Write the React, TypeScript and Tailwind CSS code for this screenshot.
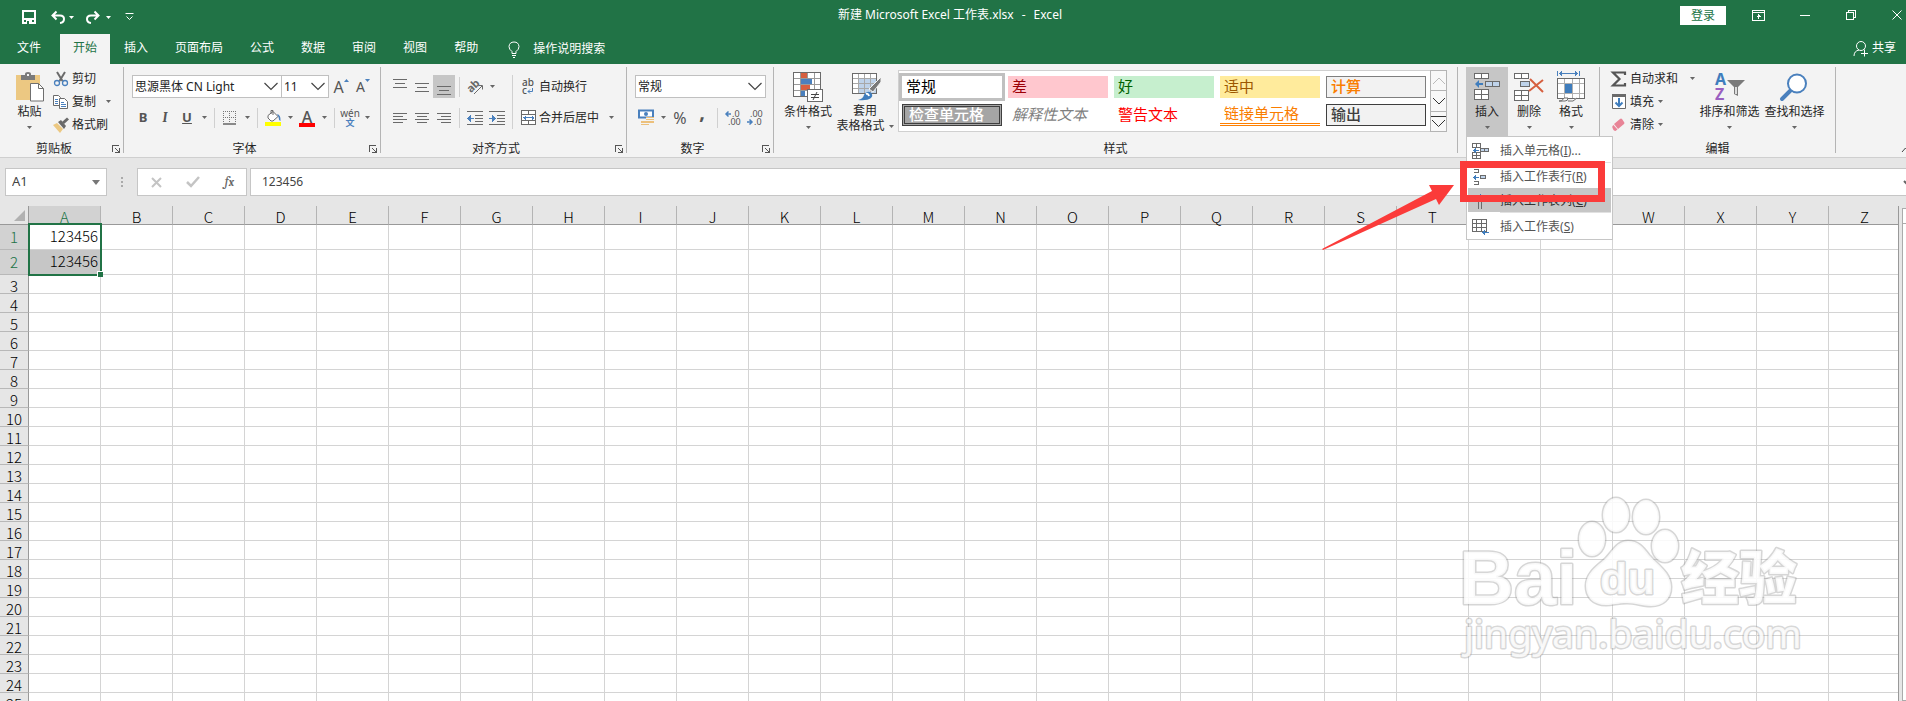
import { Fragment } from "react";
import type { ReactNode } from "react";
import clsx from "clsx";

const TABS = ["文件", "开始", "插入", "页面布局", "公式", "数据", "审阅", "视图", "帮助"];
const COLUMNS = "ABCDEFGHIJKLMNOPQRSTUVWXYZ".split("");
const ROWS = Array.from({ length: 25 }, (_, i) => i + 1);
const CELLS: Record<string, string> = { A1: "123456", A2: "123456" };

const STYLES = [
  { name: "常规", className: "bg-white text-black outline-3 outline-[#c0c0c0]" },
  { name: "差", className: "bg-[#ffc7ce] text-[#9c0006]" },
  { name: "好", className: "bg-[#c6efce] text-[#006100]" },
  { name: "适中", className: "bg-[#ffeb9c] text-[#9c5700]" },
  { name: "计算", className: "border border-[#7f7f7f] bg-[#f2f2f2] font-medium text-[#fa7d00]" },
  { name: "检查单元格", className: "border-3 border-double border-[#3f3f3f] bg-[#a5a5a5] font-medium text-white" },
  { name: "解释性文本", className: "italic text-[#7f7f7f]" },
  { name: "警告文本", className: "text-[#ff0000]" },
  { name: "链接单元格", className: "border-b-3 border-double border-[#ff8001] text-[#fa7d00]" },
  { name: "输出", className: "border border-[#3f3f3f] bg-[#f2f2f2] font-medium text-[#3f3f3f]" },
];

type IconProps = { w?: number; h?: number; crisp?: boolean; children: ReactNode; className?: string };

function Icon({ w = 16, h = 16, crisp, children, className }: IconProps) {
  return (
    <svg
      width={w}
      height={h}
      viewBox={`0 0 ${w} ${h}`}
      fill="none"
      stroke="#6a6a6a"
      shapeRendering={crisp ? "crispEdges" : "auto"}
      className={clsx("shrink-0 overflow-visible", className)}
      aria-hidden="true"
    >
      {children}
    </svg>
  );
}

function Caret({ className }: { className?: string }) {
  return (
    <svg width="5" height="3" viewBox="0 0 5 3" className={clsx("shrink-0", className)} aria-hidden="true">
      <path d="M0 0h5L2.500 3z" fill="currentColor" />
    </svg>
  );
}

function Chevron() {
  return (
    <Icon w={14} h={9} className="pointer-events-none mr-[3px]">
      <path d="M.5 1L7 7.500 13.500 1" stroke="#444" strokeWidth="1.2" />
    </Icon>
  );
}

function Launcher({ label }: { label: string }) {
  return (
    <button aria-label={label} className="mr-[3px] ml-1 flex w-2">
      <Icon w={8} h={8} crisp>
        <path d="M.5 7V.5H7M7.500 3v4.500H3M3 3l4 4" stroke="#555" />
      </Icon>
    </button>
  );
}

type GroupProps = { label: string; launcher?: boolean; className?: string; children: ReactNode };

function Group({ label, launcher, className, children }: GroupProps) {
  return (
    <section
      aria-label={label}
      className={clsx("mt-[3px] flex h-[86px] shrink-0 flex-col border-r border-[#b4b4b4]", className)}
    >
      <div className="flex flex-1">{children}</div>
      <div className="flex h-2 items-center">
        <span className={clsx("flex-1 text-center leading-3", !launcher && "px-3")}>{label}</span>
        {launcher ? <Launcher label={`${label}设置`} /> : null}
      </div>
    </section>
  );
}

function BigButton({ icon, label, className }: { icon: ReactNode; label: string; className?: string }) {
  return (
    <button className={clsx("flex h-[69px] shrink-0 flex-col items-center pt-1", className)}>
      <span className="flex h-[31px] items-center">{icon}</span>
      <span className="mt-[2px] leading-4 whitespace-nowrap">{label}</span>
      <Caret className="mt-[6px] text-[#666]" />
    </button>
  );
}

function SmallButton({ icon, label, caret }: { icon: ReactNode; label: string; caret?: string }) {
  return (
    <button className="flex h-[23px] items-center whitespace-nowrap">
      <span className="mr-[3px] flex w-4 justify-center">{icon}</span>
      {label}
      {caret ? <Caret className={clsx("text-[#666]", caret)} /> : null}
    </button>
  );
}

function Tool({ label, className, children }: { label: string; className?: string; children: ReactNode }) {
  return (
    <button
      aria-label={label}
      className={clsx("flex h-[23px] w-[22px] shrink-0 items-center justify-center text-[#555]", className)}
    >
      {children}
    </button>
  );
}

function DropTool() {
  return (
    <button aria-label="更多选项" className="flex h-[23px] w-3 shrink-0 items-center justify-center text-[#666]">
      <Caret />
    </button>
  );
}

function Divider() {
  return <span className="h-5 w-px shrink-0 bg-[#d0d0d0]" />;
}

function Combo({ label, value, className }: { label: string; value: string; className: string }) {
  return (
    <div className={clsx("flex h-[23px] items-center border border-[#c0c0c0] bg-white", className)}>
      <select aria-label={label} className="min-w-0 flex-1 appearance-none pl-[2px] text-[#222] outline-none">
        <option>{value}</option>
      </select>
      <Chevron />
    </div>
  );
}

/* ---------- icons ---------- */

const PasteIcon = (
  <Icon w={30} h={30}>
    <path d="M1 3h24v25H1z" fill="#ecc882" stroke="none" />
    <path d="M6 8V3h4V2q0-2 3-2t3 2v1h4v5z" fill="#7a7a7a" stroke="none" />
    <path d="M12 2h2v2h-2z" fill="#f3f3f3" stroke="none" />
    <path d="M15.500 11.500h8l5 5v12.500h-13z" fill="#fff" stroke="#6f6f6f" />
    <path d="M23.500 11.500v5h5" stroke="#6f6f6f" />
  </Icon>
);

const CutIcon = (
  <Icon>
    <path d="M4 1l5.500 9M12 1L6.500 10" stroke="#6a6a6a" strokeWidth="2" />
    <circle cx="4" cy="12" r="2.500" stroke="#4a80bd" strokeWidth="1.3" />
    <circle cx="12" cy="12" r="2.500" stroke="#4a80bd" strokeWidth="1.3" />
  </Icon>
);

const CopyIcon = (
  <Icon>
    <path d="M.5 1.500h5l2 2v8h-7z" fill="#fff" />
    <path d="M2 5.500h3M2 7.500h3M2 9.500h3" stroke="#4a80bd" />
    <path d="M6.500 4.500h5l3 3v7h-8z" fill="#fff" />
    <path d="M8 8.500h3M8 10.500h5M8 12.500h5" stroke="#4a80bd" />
  </Icon>
);

const BrushIcon = (
  <Icon>
    <path d="M0 8l4-2 6 6-3 4z" fill="#ecc882" stroke="none" />
    <path d="M5 5l3-2 5 6-2 3z" fill="#6a6a6a" stroke="none" />
    <path d="M10 6l5-4.500" strokeWidth="3" />
  </Icon>
);

function LinesIcon({ y, widths, align }: { y: number; widths: number[]; align: "l" | "c" | "r" }) {
  return (
    <Icon w={14} h={16} crisp>
      {widths.map((w, i) => {
        const x = align === "l" ? 0 : align === "r" ? 14 - w : (14 - w) / 2;
        return <path key={i} d={`M${x} ${y + i * (widths.length > 3 ? 3 : 4) + 0.5}h${w}`} />;
      })}
    </Icon>
  );
}

const FillIcon = (
  <Icon w={17} h={17}>
    <path d="M3 6.500l5-4 5 5-5 4.500H6L3 9z" fill="#fff" />
    <path d="M6 5V1.500h2V6" />
    <path d="M12 5q4 1 3.500 7-2-1-2-4z" fill="#4a80bd" stroke="none" />
    <path d="M0 13h16v4H0z" fill="#ff0" stroke="none" />
  </Icon>
);

const BordersIcon = (
  <Icon w={14} h={14}>
    <path d="M.5 0v12M6.500 0v12M12.500 0v12M0 .5h13M0 6.500h13" stroke="#777" strokeDasharray="1 1" />
    <path d="M0 13h13" stroke="#666" strokeWidth="1.500" />
  </Icon>
);

const OrientationIcon = (
  <Icon w={17} h={16}>
    <text x="0" y="11" transform="rotate(-45 6 8)" fontSize="11" fontWeight="bold" fill="#666" stroke="none">
      ab
    </text>
    <path d="M7 15l8-8M11.500 6.500H15.500V10.500" />
  </Icon>
);

const WrapIcon = (
  <Icon w={14} h={17}>
    <text x="1" y="8" fontSize="10" fontWeight="500" fill="#555" stroke="none">
      ab
    </text>
    <text x="1" y="16" fontSize="10" fontWeight="500" fill="#555" stroke="none">
      c
    </text>
    <path d="M11.500 10v3.500H7M9 11.500l-2 2 2 2" stroke="#4a80bd" />
  </Icon>
);

const MergeIcon = (
  <Icon w={15} h={15} crisp>
    <path d="M.5.500h14v14H.5zM.5 4.500h14M.5 10.500h14M7.500 0v4M7.500 11v4" fill="#fff" />
    <path d="M2 7.500h11M4 5.500v4M3 6.500v2M11 5.500v4M12 6.500v2" stroke="#4a80bd" />
  </Icon>
);

function IndentIcon({ out }: { out?: boolean }) {
  return (
    <Icon w={16} h={14} crisp>
      <path d="M0 .5h16M8 4.500h8M8 7.500h8M8 10.500h8M0 13.500h16" />
      {out ? (
        <path d="M0 7h7M2.500 4.500v5M1.500 5.500v3M3.500 3.500v7" stroke="#4a80bd" />
      ) : (
        <path d="M0 7h7M4.500 4.500v5M5.500 5.500v3M3.500 3.500v7" stroke="#4a80bd" />
      )}
    </Icon>
  );
}

const CurrencyIcon = (
  <Icon w={16} h={17}>
    <path d="M1 1.500h14v7H1z" fill="#fff" stroke="#4a80bd" strokeWidth="2" />
    <circle cx="8" cy="5" r="2" fill="#4a80bd" stroke="none" />
    <path d="M8 8h8v6H8zM3 12h8v4H3z" fill="#ecc07c" stroke="none" />
    <path d="M8 9.500h8M8 11.500h8M3 14.500h8" stroke="#f3f3f3" />
  </Icon>
);

function DecimalIcon({ grow }: { grow?: boolean }) {
  return (
    <Icon w={15} h={16}>
      <text x={grow ? 7 : 3} y="7" fontSize="9" fill="#555" stroke="none">
        {grow ? ".0" : ".00"}
      </text>
      <text x={grow ? 3 : 7} y="15" fontSize="9" fill="#555" stroke="none">
        {grow ? ".00" : ".0"}
      </text>
      {grow ? (
        <path d="M6 4H1M3.500 1.500L1 4l2.500 2.500" stroke="#4a80bd" strokeWidth="1.500" />
      ) : (
        <path d="M0 12h5M2.500 9.500L5 12l-2.500 2.500" stroke="#4a80bd" strokeWidth="1.500" />
      )}
    </Icon>
  );
}

const ConditionalIcon = (
  <Icon w={30} h={30} crisp>
    <path d="M.5.500h27v24H.5z" fill="#fff" />
    <path d="M1 6.500h26M1 12.500h26M1 18.500h26M7.500 1v23M14.500 1v23M21.500 1v23" stroke="#9a9a9a" />
    <path d="M8 1h6v5H8zM8 13h9v5H8z" fill="#d65f3f" stroke="none" />
    <path d="M8 7h11v5H8zM8 19h4v5H8z" fill="#4a80bd" stroke="none" />
    <path d="M14.500 17.500h15v12h-15z" fill="#fff" />
    <path d="M18 22.500h8M18 25.500h8M24 20l-4 8" stroke="#444" shapeRendering="auto" />
  </Icon>
);

const TableFormatIcon = (
  <Icon w={30} h={29}>
    <path d="M.5 1.500h24v20H.5z" fill="#fff" shapeRendering="crispEdges" />
    <path d="M7 7h17v14H7z" fill="#bfd3ea" stroke="none" />
    <path
      d="M1 6.500h23M1 11.500h23M1 16.500h23M6.500 2v19M12.500 2v19M18.500 2v19"
      stroke="#a8a8a8"
      shapeRendering="crispEdges"
    />
    <path d="M29 5v5L21 20l-4-3z" fill="#7a7a7a" stroke="#f3f3f3" />
    <path d="M6 28q5-1 6-5 2-4 6-3 4 3 1 6-4 3-13 2z" fill="#3f7dbd" stroke="none" />
    <path d="M14 22q2-1 3 2" stroke="#fff" strokeWidth="2" />
  </Icon>
);

const ARROW_LEFT = "M0 4l4-4v3h4v2H4v3z";

const InsertIcon = (
  <Icon w={28} h={28} crisp>
    <path d="M1.500.500h14v5h-14zM8.500 0v6M1.500 16.500h14v10h-14zM8.500 16v10M1 21.500h14" fill="#fff" />
    <path d="M12.500 8.500h14v5h-14zM19.500 8v5" fill="#bfd3ea" />
    <g transform="translate(2 7)" shapeRendering="auto">
      <path d={ARROW_LEFT} fill="#3f7dbd" stroke="none" />
    </g>
  </Icon>
);

const DeleteIcon = (
  <Icon w={30} h={28}>
    <path
      d="M.5.500h14v5h-14zM7.500 0v6M.5 17.500h14v10h-14zM7.500 17v10M0 22.500h14"
      fill="#fff"
      shapeRendering="crispEdges"
    />
    <path d="M6.500 8.500h9v5h-9z" fill="#bfd3ea" shapeRendering="crispEdges" />
    <path d="M16 6l13 13M29 7L15 18" stroke="#d65f3f" strokeWidth="2" />
  </Icon>
);

const FormatIcon = (
  <Icon w={28} h={31} crisp>
    <path d="M.5 0v5M22.500 0v5M2 2.500h19M4.500 0v5M3.500 1v3M18.500 0v5M19.500 1v3" stroke="#4a80bd" />
    <path d="M.5 7.500h27v20H.5z" fill="#fff" />
    <path d="M1 12.500h26M1 22.500h26M7.500 8v19M15.500 8v19M22.500 8v19" stroke="#b0b0b0" />
    <path d="M8 13h7v9H8z" fill="#3f7dbd" stroke="none" />
    <path d="M2 30q3 1 5-3h4q0 3-3 3zM11 30h5l4-3" fill="#fff" shapeRendering="auto" />
  </Icon>
);

const SumIcon = (
  <Icon w={16} h={16}>
    <path d="M14 4V1.500H2L8.500 8 2 14.500h12V12" stroke="#555" strokeWidth="2.200" />
  </Icon>
);

const FillDownIcon = (
  <Icon w={14} h={15}>
    <path d="M.5.500h13v14H.5z" fill="#fff" />
    <path d="M0 0h14v3H0z" fill="#6a6a6a" stroke="none" />
    <path d="M7 4v8M3.500 8.500L7 12l3.500-3.500" stroke="#3f7dbd" strokeWidth="2" />
  </Icon>
);

const EraserIcon = (
  <Icon w={14} h={14}>
    <path d="M8 1q1-1 2 0l2 3q1 1 0 2l-6 5-4-5z" fill="#e88497" stroke="none" />
    <path d="M1.500 7l4 4.500-2 1.500q-1 0-2-1l-1-2q-.5-1 0-2z" fill="#e88497" stroke="none" />
  </Icon>
);

const SortIcon = (
  <Icon w={30} h={30}>
    <text x="0" y="13" fontSize="16" fontWeight="bold" fill="#3f7dbd" stroke="none">
      A
    </text>
    <text x="0" y="28" fontSize="16" fontWeight="bold" fill="#9a5fc0" stroke="none">
      Z
    </text>
    <path d="M12 8h18l-7 7v9l-4-2v-7z" fill="#7a7a7a" stroke="none" />
    <path d="M21 15v7" stroke="#fff" strokeWidth="1.500" />
  </Icon>
);

const FindIcon = (
  <Icon w={28} h={28}>
    <path d="M1 26l9-9" stroke="#4a80bd" strokeWidth="4" strokeLinecap="round" />
    <circle cx="16" cy="10.500" r="9" fill="#fff" stroke="#4a80bd" strokeWidth="2" />
  </Icon>
);

const MenuCellsIcon = (
  <Icon w={17} h={16} crisp>
    <path d="M.5.500h8v4h-8zM4.500 0v4M.5 9.500h8v6h-8zM4.500 9v6M0 12.500h8" fill="#fff" />
    <path d="M8.500 5.500h8v3h-8zM12.500 5v3" fill="#bfd3ea" />
    <path d="M1 7h6M3.500 4.500v5M2.500 5.500v3" stroke="#3f7dbd" />
  </Icon>
);

const MenuRowIcon = (
  <Icon w={16} h={16} crisp>
    <path d="M2 .5h4.500v3H2M2 15.500h4.500v-3H2" />
    <path d="M8.500 6.500h5v3h-5z" fill="#bfd3ea" />
    <path d="M1 8h6M3.500 5.500v5M2.500 6.500v3" stroke="#3f7dbd" />
  </Icon>
);

const MenuColumnIcon = (
  <Icon w={16} h={16} crisp>
    <path d="M.5 2v4.500h3V2M15.500 2v4.500h-3V2M6.500 8.500v7M9.500 8.500v7" />
    <path d="M8 1v6M5.500 3.500h5M6.500 2.500h3" stroke="#3f7dbd" />
  </Icon>
);

const MenuSheetIcon = (
  <Icon w={17} h={16} crisp>
    <path d="M.5.500h14v12H.5zM0 4.500h14M0 8.500h14M4.500 0v12M9.500 0v12" fill="#fff" />
    <path d="M10 13h7M12.500 10.500v5M11.500 11.500v3" stroke="#3f7dbd" />
  </Icon>
);

/* ---------- title bar and tabs ---------- */

function TitleBar() {
  return (
    <header className="flex h-[34px] items-center bg-[#217346] pb-1 text-white">
      <div className="flex flex-1 items-center pt-1 pl-[22px]">
        <button aria-label="保存">
          <Icon w={14} h={14} crisp>
            <path d="M1 1h12v12H1z" stroke="#fff" strokeWidth="2" />
            <path d="M2 8h10v2H2zM4 10h6v4H4z" fill="#fff" stroke="none" />
            <path d="M5 11h2v3H5z" fill="#217346" stroke="none" />
          </Icon>
        </button>
        <button aria-label="撤消" className="ml-[15px]">
          <Icon w={14} h={13}>
            <path d="M1 4.500h8q4 0 4 3.500t-4 4M5.500.500L1.500 4.500l4 4" stroke="#fff" strokeWidth="2" />
          </Icon>
        </button>
        <Caret className="ml-1" />
        <button aria-label="恢复" className="ml-3">
          <Icon w={14} h={13}>
            <path d="M13 4.500H5q-4 0-4 3.500t4 4M8.500.500l4 4-4 4" stroke="#fff" strokeWidth="2" />
          </Icon>
        </button>
        <Caret className="ml-[6px]" />
        <button aria-label="自定义快速访问工具栏" className="ml-[14px]">
          <Icon w={9} h={8}>
            <path d="M.5.500h8M1.500 3.500l3 3 3-3" stroke="#fff" />
          </Icon>
        </button>
      </div>
      <h1 className="flex gap-2 whitespace-nowrap">
        <span>新建 Microsoft Excel 工作表.xlsx</span>
        <span>-</span>
        <span>Excel</span>
      </h1>
      <div className="flex flex-1 items-center justify-end pr-1 pl-6">
        <button className="mr-[26px] h-[19px] w-[46px] bg-white leading-[19px] text-[#217346]">登录</button>
        <button aria-label="功能区显示选项">
          <Icon w={13} h={11} crisp>
            <path d="M.5.500h12v10H.5zM0 2.500h13M6.500 4v5M4.500 6.500h4M5.500 5.500h2" stroke="#fff" />
          </Icon>
        </button>
        <button aria-label="最小化" className="ml-[35px]">
          <Icon w={10} h={10} crisp>
            <path d="M0 5.500h10" stroke="#fff" />
          </Icon>
        </button>
        <button aria-label="还原" className="ml-9">
          <Icon w={10} h={10} crisp>
            <path d="M.5 2.500h7v7h-7zM2.500 2V.5h7v7H8" stroke="#fff" />
          </Icon>
        </button>
        <button aria-label="关闭" className="ml-9">
          <Icon w={10} h={10}>
            <path d="M.5.500l9 9M9.500.500l-9 9" stroke="#fff" />
          </Icon>
        </button>
      </div>
    </header>
  );
}

function TabBar() {
  return (
    <nav className="flex h-[30px] items-stretch gap-px bg-[#217346] pl-1 text-white">
      {TABS.map((tab) => (
        <button
          key={tab}
          className={clsx(
            "px-[13px] pb-[2px] whitespace-nowrap",
            tab === "文件" && "mr-[5px]",
            tab === "开始" && "bg-[#f3f3f3] text-[#217346]",
          )}
        >
          {tab}
        </button>
      ))}
      <button className="ml-4 flex items-center whitespace-nowrap">
        <Icon w={12} h={17} className="mr-[13px]">
          <path d="M4 12.500v-2Q1 8.500 1 5.500 1.500 1 6 1t5 4.500q0 3-3 5v2zM4 14.500h4M5 16.500h2" stroke="#fff" />
        </Icon>
        操作说明搜索
      </button>
      <button className="mr-[10px] ml-auto flex items-center pb-[2px] whitespace-nowrap">
        <Icon w={15} h={17} className="mr-1">
          <circle cx="8" cy="6" r="4.500" stroke="#fff" />
          <path d="M1 16q0-5 5-6M11.500 9.500v7M8 13.500h7" stroke="#fff" />
        </Icon>
        共享
      </button>
    </nav>
  );
}

/* ---------- ribbon ---------- */

function InsertMenu() {
  const items = [
    { icon: MenuCellsIcon, label: "插入单元格", hotkey: "I", suffix: "...", rule: true },
    { icon: MenuRowIcon, label: "插入工作表行", hotkey: "R" },
    { icon: MenuColumnIcon, label: "插入工作表列", hotkey: "C", active: true, rule: true },
    { icon: MenuSheetIcon, label: "插入工作表", hotkey: "S" },
  ];
  return (
    <div role="menu" className="absolute top-[69px] left-0 w-[147px] border border-[#c6c6c6] bg-white p-px text-[#555]">
      {items.map((item) => (
        <Fragment key={item.hotkey}>
          <button
            role="menuitem"
            className={clsx(
              "flex h-6 w-full items-center pt-px pl-1 whitespace-nowrap",
              item.active && "bg-[#c6c6c6] text-[#333]",
            )}
          >
            <span className="w-7">{item.icon}</span>
            <span>
              {item.label}(<u>{item.hotkey}</u>){item.suffix}
            </span>
          </button>
          {item.rule ? <div className="mb-px ml-8 h-px bg-[#e1e1e1]" /> : null}
        </Fragment>
      ))}
    </div>
  );
}

function Callout() {
  return (
    <>
      <div className="pointer-events-none absolute top-[94px] -left-[6px] h-[41px] w-[145px] border-7 border-[#fb3b3a]" />
      <svg
        width="136"
        height="70"
        viewBox="0 0 136 70"
        className="pointer-events-none absolute top-[116px] -left-[145px]"
        aria-hidden="true"
      >
        <path d="M133 2L118 22l-3-6L2 67 1 66 111 8l-3-6z" fill="#fb3b3a" />
      </svg>
    </>
  );
}

function StyleGallery() {
  return (
    <div className="mt-[3px] ml-[3px] flex h-[62px] border border-[#d0d0d0] bg-white">
      <div className="grid grid-cols-5 content-start gap-[6px] pt-[5px] pr-1 pl-[3px] text-[15px]">
        {STYLES.map((style) => (
          <button
            key={style.name}
            className={clsx(
              "flex h-[22px] w-[100px] items-center pb-[2px] pl-1 leading-4 whitespace-nowrap",
              style.className,
            )}
          >
            {style.name}
          </button>
        ))}
      </div>
      <div className="-my-px -mr-px flex w-[17px] flex-col border border-[#b4b4b4] bg-[#f8f8f8]">
        <button aria-label="向上滚动" className="flex flex-1 items-center justify-center">
          <Icon w={14} h={8}>
            <path d="M1 7l6-6 6 6" stroke="#bbb" />
          </Icon>
        </button>
        <button
          aria-label="向下滚动"
          className="flex flex-1 items-center justify-center border-y border-[#b4b4b4]"
        >
          <Icon w={14} h={8}>
            <path d="M1 1l6 6 6-6" stroke="#333" />
          </Icon>
        </button>
        <button aria-label="其他样式" className="flex flex-1 items-center justify-center">
          <Icon w={15} h={13}>
            <path d="M0 1.500h15M1 5l6.500 6.500L14 5" stroke="#333" />
          </Icon>
        </button>
      </div>
    </div>
  );
}

function Ribbon() {
  return (
    <div className="relative z-20 flex h-[94px] border-b border-[#cfcfcf] bg-[#f3f3f3] text-[#262626]">
      <Group label="剪贴板" launcher className="w-[124px]">
        <BigButton icon={PasteIcon} label="粘贴" className="ml-[7px] w-[45px]" />
        <div className="ml-px flex flex-col">
          <SmallButton icon={CutIcon} label="剪切" />
          <SmallButton icon={CopyIcon} label="复制" caret="ml-[10px]" />
          <SmallButton icon={BrushIcon} label="格式刷" />
        </div>
      </Group>

      <Group label="字体" launcher className="w-[257px]">
        <div className="flex flex-col gap-2 pt-2 pl-2">
          <div className="flex items-center">
            <Combo label="字体" value="思源黑体 CN Light" className="w-[150px]" />
            <Combo label="字号" value="11" className="-ml-px w-12" />
            <Tool label="增大字号" className="ml-px">
              <span className="text-base">A</span>
              <Caret className="mb-3 rotate-180 text-[#4a80bd]" />
            </Tool>
            <Tool label="减小字号">
              <span className="text-sm">A</span>
              <Caret className="mb-3 text-[#4a80bd]" />
            </Tool>
          </div>
          <div className="flex items-center">
            <Tool label="加粗" className="w-[21px] text-[13px] font-bold">B</Tool>
            <Tool label="倾斜" className="font-serif text-sm font-bold italic">I</Tool>
            <Tool label="下划线" className="text-[13px] font-bold underline">U</Tool>
            <DropTool />
            <span className="w-1" />
            <Divider />
            <Tool label="边框" className="ml-1">{BordersIcon}</Tool>
            <DropTool />
            <span className="w-1" />
            <Divider />
            <Tool label="填充颜色" className="ml-1">{FillIcon}</Tool>
            <DropTool />
            <Tool label="字体颜色">
              <span className="mt-px h-[17px] w-4 border-b-4 border-[#f00] text-base leading-[15px] font-medium">A</span>
            </Tool>
            <DropTool />
            <span className="w-1" />
            <Divider />
            <Tool label="拼音" className="ml-1 flex-col">
              <span className="text-[10px] leading-[9px]">wén</span>
              <span className="text-[9px] leading-[9px] font-bold text-[#4a80bd]">文</span>
            </Tool>
            <DropTool />
          </div>
        </div>
      </Group>

      <Group label="对齐方式" launcher className="w-[246px]">
        <div className="flex flex-col gap-2 pt-2 pl-2">
          <div className="flex items-center">
            <Tool label="顶端对齐"><LinesIcon y={0} widths={[14, 10, 14]} align="c" /></Tool>
            <Tool label="垂直居中"><LinesIcon y={4} widths={[14, 10, 14]} align="c" /></Tool>
            <Tool label="底端对齐" className="bg-[#c6c6c6]">
              <LinesIcon y={7} widths={[14, 10, 14]} align="c" />
            </Tool>
            <span className="w-1" />
            <Divider />
            <Tool label="方向" className="ml-1">{OrientationIcon}</Tool>
            <DropTool />
          </div>
          <div className="flex items-center">
            <Tool label="左对齐"><LinesIcon y={3} widths={[14, 10, 14, 10]} align="l" /></Tool>
            <Tool label="居中"><LinesIcon y={3} widths={[14, 10, 14, 10]} align="c" /></Tool>
            <Tool label="右对齐"><LinesIcon y={3} widths={[14, 10, 14, 10]} align="r" /></Tool>
            <span className="w-1" />
            <Divider />
            <Tool label="减少缩进量" className="ml-1"><IndentIcon out /></Tool>
            <Tool label="增加缩进量"><IndentIcon /></Tool>
          </div>
        </div>
        <span className="mt-2 ml-[4px] h-[54px] w-px bg-[#d0d0d0]" />
        <div className="ml-[7px] flex flex-col gap-2 pt-2">
          <SmallButton icon={WrapIcon} label="自动换行" />
          <SmallButton icon={MergeIcon} label="合并后居中" caret="ml-[10px]" />
        </div>
      </Group>

      <Group label="数字" launcher className="w-[147px]">
        <div className="flex flex-col gap-2 pt-2 pl-2">
          <Combo label="数字格式" value="常规" className="w-[131px]" />
          <div className="flex items-center">
            <Tool label="会计数字格式">{CurrencyIcon}</Tool>
            <DropTool />
            <Tool label="百分比样式" className="text-base">%</Tool>
            <Tool label="千位分隔样式" className="pb-3 text-xl font-bold">,</Tool>
            <span className="w-1" />
            <Divider />
            <Tool label="增加小数位数" className="ml-[3px]"><DecimalIcon grow /></Tool>
            <Tool label="减少小数位数"><DecimalIcon /></Tool>
          </div>
        </div>
      </Group>

      <Group label="样式" className="w-[684px]">
        <BigButton icon={ConditionalIcon} label="条件格式" className="ml-[7px] w-[54px]" />
        <button className="flex h-[69px] w-[60px] flex-col items-center pt-1">
          <span className="flex h-[31px] items-center pl-1">{TableFormatIcon}</span>
          <span className="mt-px leading-4">套用</span>
          <span className="flex items-center gap-1 leading-[14px] whitespace-nowrap">
            表格格式
            <Caret className="text-[#666]" />
          </span>
        </button>
        <StyleGallery />
      </Group>

      <Group label="" className="w-[142px]">
        <div className="relative ml-2 flex">
          <BigButton icon={InsertIcon} label="插入" className="w-[42px] bg-[#c6c6c6]" />
          <BigButton icon={DeleteIcon} label="删除" className="w-[42px]" />
          <BigButton icon={FormatIcon} label="格式" className="w-[42px]" />
          <InsertMenu />
          <Callout />
        </div>
      </Group>

      <Group label="编辑" className="w-[236px]">
        <div className="ml-[11px] flex w-[86px] flex-col">
          <SmallButton icon={SumIcon} label="自动求和" caret="ml-3" />
          <SmallButton icon={FillDownIcon} label="填充" caret="ml-1" />
          <SmallButton icon={EraserIcon} label="清除" caret="ml-1" />
        </div>
        <BigButton icon={SortIcon} label="排序和筛选" className="w-[65px]" />
        <BigButton icon={FindIcon} label="查找和选择" className="w-[65px]" />
      </Group>

      <button aria-label="折叠功能区" className="mt-auto -mr-1 mb-1 ml-auto">
        <Icon w={9} h={6}>
          <path d="M1 5l3.500-4L8 5" stroke="#444" />
        </Icon>
      </button>
    </div>
  );
}

/* ---------- formula bar and sheet ---------- */

function FormulaBar() {
  return (
    <div className="flex h-12 py-[10px] pl-[5px] text-[#444]">
      <div className="flex w-[102px] items-center border border-[#c6c6c6] bg-white">
        <input aria-label="名称框" defaultValue="A1" className="min-w-0 flex-1 pl-[6px] text-[13px] outline-none" />
        <svg width="8" height="5" viewBox="0 0 8 5" className="mr-[6px]" aria-hidden="true">
          <path d="M0 0h8L4 5z" fill="#777" />
        </svg>
      </div>
      <Icon w={2} h={28} crisp className="mx-[14px]">
        <path d="M1 9v2M1 13v2M1 17v2" stroke="#aaa" strokeWidth="2" />
      </Icon>
      <div className="flex w-[110px] items-center justify-between border border-[#c6c6c6] bg-white pr-3 pl-[13px]">
        <button aria-label="取消">
          <Icon w={11} h={11}>
            <path d="M1 1l9 9M10 1l-9 9" stroke="#c4c4c4" strokeWidth="2" />
          </Icon>
        </button>
        <button aria-label="输入">
          <Icon w={14} h={12}>
            <path d="M1 6l4 4 8-9" stroke="#c4c4c4" strokeWidth="2.500" />
          </Icon>
        </button>
        <button aria-label="插入函数" className="pb-px font-serif text-[15px] text-[#666] italic">
          f<span className="text-[11px] font-bold">x</span>
        </button>
      </div>
      <div className="ml-[3px] flex flex-1 items-center border border-r-0 border-[#c6c6c6] bg-white">
        <input aria-label="编辑栏" defaultValue="123456" className="min-w-0 flex-1 pl-[11px] outline-none" />
        <Icon w={8} h={5} className="-mr-[5px]">
          <path d="M1 1l3 3 3-3" stroke="#666" strokeWidth="2" />
        </Icon>
      </div>
    </div>
  );
}

function Sheet() {
  return (
    <div className="relative flex-1 overflow-hidden border-r border-[#999] font-['Noto_Sans_CJK_SC',sans-serif] font-light">
      <table className="w-[1901px] table-fixed border-separate border-spacing-0 bg-white text-[15px] leading-[14px] text-black">
        <thead>
          <tr className="h-[19px] bg-[#e6e6e6]">
            <th className="h-[19px] w-[29px] border-r border-b border-[#999] p-0">
              <Icon w={11} h={11} className="mt-px mr-[3px] ml-auto">
                <path d="M11 0v11H0z" fill="#b1b1b1" stroke="none" />
              </Icon>
            </th>
            {COLUMNS.map((col) => (
              <th
                key={col}
                scope="col"
                className={clsx(
                  "border-r border-b border-r-[#b4b4b4] border-b-[#999] p-0 pt-1 font-light",
                  col === "A" && "bg-[#d2d2d2] text-[#217346]",
                )}
              >
                {col}
              </th>
            ))}
          </tr>
        </thead>
        <tbody>
          {ROWS.map((row) => (
            <tr key={row} className={row < 3 ? "h-[25px]" : "h-[19px]"}>
              <th
                scope="row"
                className={clsx(
                  "border-r border-b border-r-[#999] border-b-[#b8b8b8] p-0 font-light",
                  row < 3 ? "bg-[#d2d2d2] text-[#217346]" : "bg-[#e6e6e6] pt-1",
                )}
              >
                {row}
              </th>
              {COLUMNS.map((col) => (
                <td
                  key={col}
                  className={clsx(
                    "border-r border-b border-[#d4d4d4] p-0 pr-[2px] pb-[2px] text-right",
                    col + row === "A2" && "bg-[#c6c6c6]",
                  )}
                >
                  {CELLS[col + row]}
                </td>
              ))}
            </tr>
          ))}
        </tbody>
      </table>
      <div className="pointer-events-none absolute top-[17px] left-[28px] h-[53px] w-[74px] border-2 border-[#217346]">
        <span className="absolute -right-[3px] -bottom-[3px] size-[6px] border-t border-l border-white bg-[#217346]" />
      </div>
    </div>
  );
}

function Watermark() {
  return (
    <svg
      width="360"
      height="180"
      viewBox="0 0 360 180"
      className="pointer-events-none absolute right-[91px] bottom-[31px]"
      fill="#fff"
      fillOpacity="0.85"
      stroke="#999"
      strokeOpacity="0.4"
      strokeWidth="3"
      strokeLinejoin="round"
      paintOrder="stroke"
      aria-hidden="true"
    >
      <text x="4" y="114" fontSize="76" fontWeight="bold" fontFamily="Liberation Sans">
        Bai
      </text>
      <ellipse cx="137" cy="49" rx="13" ry="17" />
      <ellipse cx="161" cy="25" rx="13" ry="17" />
      <ellipse cx="191" cy="27" rx="13" ry="17" />
      <ellipse cx="210" cy="56" rx="13" ry="16" />
      <path d="M173 51c10 0 15 6 21 14 9 10 22 18 22 32 0 12-8 19-20 19-9 0-15-3-24-3s-14 2-21 2c-13 0-20-8-20-19 0-13 11-20 19-27 8-8 12-18 23-18z" />
      <text x="145" y="104" fontSize="45" fontWeight="bold" fontFamily="Liberation Sans">
        du
      </text>
      <text x="226" y="109" fontSize="58" fontWeight="900" fontFamily="Noto Sans CJK SC">
        经验
      </text>
      <text x="9" y="158" fontSize="39" fontFamily="Noto Sans">
        jingyan.baidu.com
      </text>
    </svg>
  );
}

export default function App() {
  return (
    <div className="relative flex h-screen flex-col overflow-hidden bg-[#e6e6e6] font-['Noto_Sans','Noto_Sans_CJK_SC',sans-serif] text-xs">
      <TitleBar />
      <TabBar />
      <Ribbon />
      <FormulaBar />
      <main className="flex min-h-0 flex-1">
        <Sheet />
        <div className="ml-[3px] flex w-1 flex-col overflow-hidden pt-[2px]">
          <div className="h-4 w-4 shrink-0 border border-[#ababab] bg-white" />
          <div className="-mt-px w-4 flex-1 border border-[#ababab] bg-white" />
        </div>
      </main>
      <Watermark />
    </div>
  );
}
